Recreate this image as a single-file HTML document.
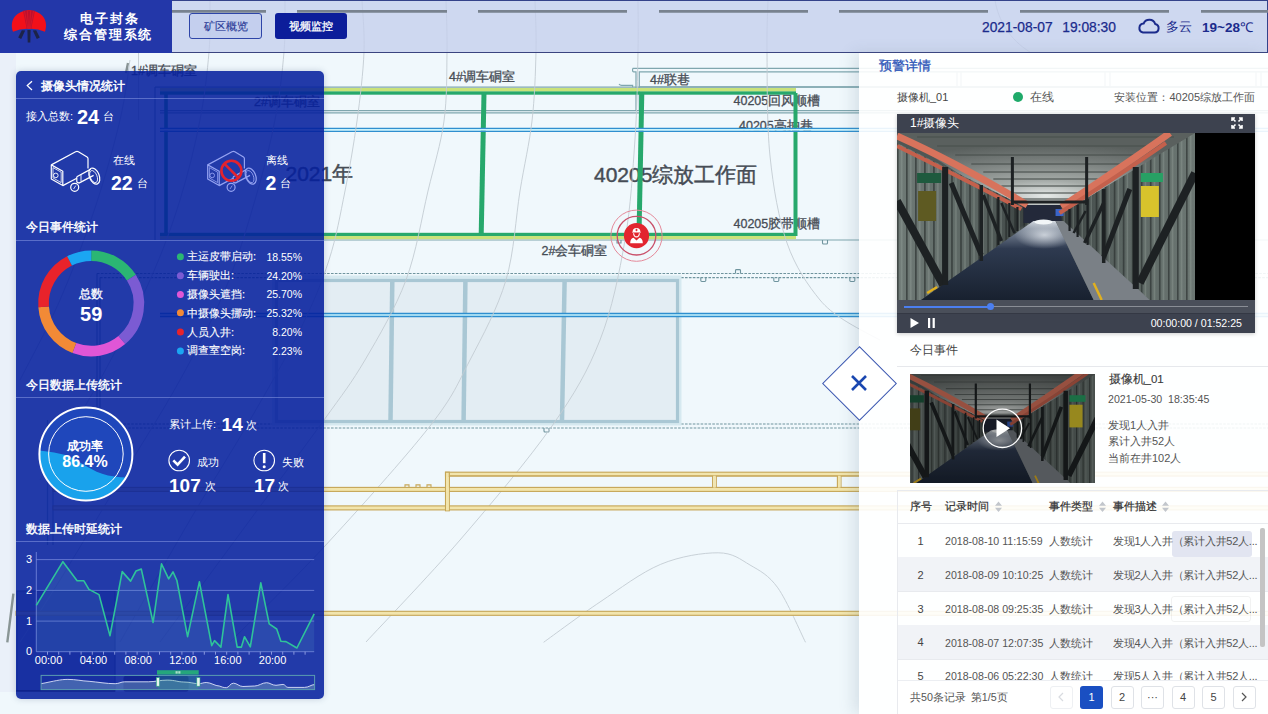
<!DOCTYPE html>
<html><head><meta charset="utf-8">
<style>
*{margin:0;padding:0;box-sizing:border-box}
html,body{width:1268px;height:714px;overflow:hidden;background:#f0f8fc;font-family:"Liberation Sans",sans-serif}
.a{position:absolute}
.t{position:absolute;white-space:nowrap;line-height:1}
svg{position:absolute;left:0;top:0}
</style></head><body>
<!-- MAP -->
<svg width="1268" height="714" viewBox="0 0 1268 714">
<rect width="1268" height="714" fill="#f0f8fc"/>
<rect x="0" y="52" width="16" height="640" fill="#eaf0f9"/>

<!-- top gray dashes -->

<!-- left gray segment -->
<path d="M13.4 593.6 L7.3 642.4 M128 63 L126 73" stroke="#8a9696" stroke-width="2.4"/><path d="M138.5 52 V120" stroke="#c3ccd2" stroke-width="0.9"/>
<!-- map texts -->
<g font-family="Liberation Sans, sans-serif" fill="#464c55" stroke="#464c55" stroke-width="0.3" font-size="12.5">
<text x="131" y="75.4">1#调车硐室</text>
<text x="254" y="106">2#调车硐室</text>
<text x="449" y="81.3">4#调车硐室</text>
<text x="650" y="83.5">4#联巷</text>
<text x="733.5" y="105">40205回风顺槽</text>
<text x="739" y="129.5">40205高抽巷</text>
<text x="733.5" y="227.5">40205胶带顺槽</text>
<text x="541.5" y="254.6">2#会车硐室</text>
<text x="594" y="182" font-size="21" stroke-width="0.45">40205综放工作面</text>
<text x="285.5" y="181" font-size="21" stroke-width="0.45">2021年</text>
</g>
<!-- rooms / lines -->
<g fill="none" stroke="#7fa6ae" stroke-width="1.2">
<path d="M155 87.2H1268"/>
<path d="M160 110.6H1268 M160 112.8H1268"/>
<path d="M160 240H1268"/>
<path d="M632.6 68.4H1268 M632.6 68.4V70.8Q632.6 71.8 633.6 71.8H636V110.6 M639.3 110.6V71.8H1268 M619 84 Q620 85.3 621.5 85.3H632.6V87.2"/>
<path d="M639.3 86.9H1268"/>
<path d="M155 87 V240"/>
</g>

<g fill="none" stroke="#8fb0b8" stroke-width="1.2">
<path d="M957 71.8V87 M961 71.8V87 M1105 71.8V87 M1110 71.8V87 M1256 71.8V87 M1261 71.8V87"/>
</g>
<!-- green workface -->
<rect x="160" y="88" width="636" height="3.6" fill="#c9e27a"/>
<rect x="160" y="91.4" width="636" height="3.3" fill="#27a86c"/>
<rect x="160" y="232.8" width="636" height="3.2" fill="#27a86c"/>
<rect x="160" y="236" width="636" height="3.2" fill="#c9e27a"/>
<g stroke="#27a86c" stroke-width="3.6" fill="none">
<path d="M484 93 L481.2 235" stroke-width="5"/>
<path d="M641.8 93 L639 235" stroke-width="5"/>
<path d="M795.5 93 V236" stroke-width="4"/>
<path d="M166 93 V236" stroke-width="3.6"/>
</g>
<!-- dashed lines -->
<g fill="none" stroke="#6f949e" stroke-width="1.1" stroke-dasharray="2.6 1.3">
<path d="M97 273.5H1268 M100 277.6H1268"/>
<path d="M100 424H1268 M97 428H1268"/>
</g>
<g fill="none" stroke="#6f949e" stroke-width="1.1">
<path d="M735.5 273.5 V270.5 Q735.5 269.6 736.5 269.6 H739.5 Q740.5 269.6 740.5 270.5 V273.5"/>
<path d="M700.8 277.6 V280.6 Q700.8 281.5 701.8 281.5 H704.8 Q705.8 281.5 705.8 280.6 V277.6"/>
<path d="M773.8 277.6 V280.6 Q773.8 281.5 774.8 281.5 H777.8 Q778.8 281.5 778.8 280.6 V277.6"/>
<path d="M849.8 277.6 V280.6 Q849.8 281.5 850.8 281.5 H853.8 Q854.8 281.5 854.8 280.6 V277.6"/>
<path d="M544 428 V431 Q544 432 545 432 H548 Q549 432 549 431 V428"/>
<path d="M1068 428 V431 Q1068 432 1069 432 H1072 Q1073 432 1073 431 V428"/>
<path d="M822.5 240 V243 Q822.5 244 823.5 244 H826.5 Q827.5 244 827.5 243 V240"/>
<path d="M617 240 V243 H621 V240"/>
</g>
<path d="M97 273.5V428 M100 277.6V424" stroke="#6f949e" stroke-width="1.1" fill="none"/>
<path d="M53 420V545 M47.5 420V545" stroke="#8fb0b8" stroke-width="1.2" fill="none"/>
<rect x="17" y="591" width="98" height="100" fill="#a4afc2" stroke="#6a7890" stroke-width="1.2"/>
<!-- big room -->
<rect x="272" y="275.5" width="409.5" height="150" fill="#d6e9f0"/>
<rect x="276.5" y="280.5" width="401" height="141" fill="#e3edf3" stroke="#a9c7d4" stroke-width="3.2"/>
<g stroke="#a9c7d4" stroke-width="4.5">
<path d="M392.3 281 L390.5 421"/>
<path d="M465.4 281 L463.6 421"/>
<path d="M564.6 281 L562 421"/>
</g>
<g fill="none" stroke="#2f8fcf" stroke-width="1.3">
<path d="M160 129.8H1268" stroke="#c8f3fc" stroke-width="2"/><path d="M160 128.3H1268 M160 131.3H1268"/>
<path d="M160 315H1268" stroke="#c8f3fc" stroke-width="2"/><path d="M160 313.5H1268 M160 316.5H1268"/>
</g>
<g fill="none" stroke="#c3ccd2" stroke-width="0.9">
<path d="M362.0 0.0 C362.3 8.7 364.8 31.8 364.0 52.0 C363.2 72.2 360.2 97.8 357.0 121.0 C353.8 144.2 349.7 167.8 345.0 191.0 C340.3 214.2 336.5 236.8 329.0 260.0 C321.5 283.2 313.2 303.3 300.0 330.0 C286.8 356.7 268.3 388.3 250.0 420.0 C231.7 451.7 211.7 483.0 190.0 520.0 C168.3 557.0 131.7 621.7 120.0 642.0"/>
<path d="M446.0 0.0 C446.2 8.7 447.3 31.8 447.0 52.0 C446.7 72.2 447.2 97.8 444.0 121.0 C440.8 144.2 434.3 164.5 428.0 191.0 C421.7 217.5 416.5 251.8 406.0 280.0 C395.5 308.2 378.7 336.7 365.0 360.0 C351.3 383.3 343.2 393.3 324.0 420.0 C304.8 446.7 277.3 483.0 250.0 520.0 C222.7 557.0 175.0 621.7 160.0 642.0"/>
<path d="M535.0 0.0 C535.2 8.7 536.5 31.8 536.0 52.0 C535.5 72.2 534.7 97.8 532.0 121.0 C529.3 144.2 524.3 164.5 520.0 191.0 C515.7 217.5 514.3 251.8 506.0 280.0 C497.7 308.2 482.7 335.7 470.0 360.0 C457.3 384.3 454.3 394.8 430.0 426.0 C405.7 457.2 357.3 511.0 324.0 547.0 C290.7 583.0 245.7 626.2 230.0 642.0"/>
<path d="M638.0 0.0 C638.0 8.7 638.5 28.8 638.0 52.0 C637.5 75.2 637.2 107.7 635.0 139.0 C632.8 170.3 630.8 206.5 625.0 240.0 C619.2 273.5 612.2 309.0 600.0 340.0 C587.8 371.0 575.3 392.7 552.0 426.0 C528.7 459.3 491.0 504.0 460.0 540.0 C429.0 576.0 381.7 625.0 366.0 642.0"/>
<path d="M768.0 0.0 C767.8 8.7 766.7 26.0 767.0 52.0 C767.3 78.0 766.7 124.2 770.0 156.0 C773.3 187.8 778.7 219.0 787.0 243.0 C795.3 267.0 808.0 285.3 820.0 300.0 C832.0 314.7 852.5 325.8 880.0 340.0"/>
<path d="M285.0 0.0 C284.8 8.7 285.7 32.0 284.0 52.0 C282.3 72.0 279.8 95.3 275.0 120.0 C270.2 144.7 263.3 171.7 255.0 200.0 C246.7 228.3 237.5 260.0 225.0 290.0 C212.5 320.0 197.5 348.3 180.0 380.0 C162.5 411.7 140.0 446.7 120.0 480.0 C100.0 513.3 76.7 553.0 60.0 580.0 C43.3 607.0 26.7 631.7 20.0 642.0"/>
<path d="M210.0 0.0 C209.8 8.7 210.7 32.0 209.0 52.0 C207.3 72.0 204.8 95.3 200.0 120.0 C195.2 144.7 188.3 173.3 180.0 200.0 C171.7 226.7 163.3 250.0 150.0 280.0 C136.7 310.0 118.3 346.7 100.0 380.0 C81.7 413.3 50.0 463.3 40.0 480.0"/>
<path d="M130.0 60.0 C128.3 70.0 125.8 95.3 120.0 120.0 C114.2 144.7 105.0 178.0 95.0 208.0 C85.0 238.0 72.5 271.3 60.0 300.0 C47.5 328.7 26.7 366.7 20.0 380.0"/>
<path d="M543.6 642.3 C553.0 635.6 580.5 615.0 600.0 602.0 C619.5 589.0 641.0 572.5 660.7 564.3 C680.4 556.1 703.3 552.7 718.2 552.8 C733.1 552.9 740.1 559.2 750.0 565.0 C759.9 570.8 768.5 574.9 777.8 587.8 C787.0 600.7 800.9 633.2 805.5 642.3"/>
<path d="M995 0 C998 20 1010 40 1030 52"/>
</g>
<!-- gold -->
<g fill="#f2e5ad" stroke="#c5a555" stroke-width="1.1">
<rect x="445.5" y="472.2" width="830" height="3.8"/>
<rect x="53" y="487.4" width="1223" height="4"/>
<rect x="53" y="505.9" width="1223" height="4"/>
<rect x="16" y="611.3" width="1260" height="4"/>
<rect x="445.5" y="472.2" width="3.8" height="38.6"/>
</g>
<g fill="none" stroke="#c6a657" stroke-width="1.1">
<path d="M449.3 476 V487.4 M449.3 476H712.6V487.4 M716.3 487.4V476H837.4V487.4 M841 487.4V476H1268"/>
<path d="M405 487.4 v-2.5 h4 v2.5 M416 487.4 v-2.5 h4 v2.5 M427 487.4 v-2.5 h4 v2.5"/>
</g>
<g fill="#f2e5ad"><rect x="446" y="476.6" width="2.8" height="33.8"/><rect x="446" y="488" width="2.8" height="3"/><rect x="713.2" y="476" width="2.5" height="11.6"/><rect x="838" y="476" width="2.5" height="11.6"/></g>
<!-- alarm marker -->
<g>
<circle cx="636.5" cy="235.7" r="25.6" fill="none" stroke="#e58a9a" stroke-width="1"/>
<circle cx="636.5" cy="235.7" r="19.3" fill="none" stroke="#c9506a" stroke-width="1.3"/>
<circle cx="636.5" cy="235.7" r="12.6" fill="#e2252f"/>
<path d="M632.6 231.8 A3.9 3.9 0 0 1 640.4 231.8 L641.2 232.6 H631.8Z" fill="#fff"/>
<path d="M636.5 228.8V231.2 M635.3 230H637.7" stroke="#e2252f" stroke-width="0.9"/>
<path d="M633.6 233.2 Q633.8 236.8 636.5 236.9 Q639.2 236.8 639.4 233.2" fill="none" stroke="#fff" stroke-width="1.1"/>
<path d="M630.2 243.3 Q630.2 238.3 633.6 237.8 L636.5 240.6 L639.4 237.8 Q642.8 238.3 642.8 243.3Z" fill="#fff"/>
</g>
</svg>
<!-- HEADER -->
<div class="a" style="left:0;top:0;width:1268px;height:53px;background:rgba(196,206,236,0.78);border:1px solid #34428a;border-bottom:1.5px solid #3a4480"></div>
<svg width="1268" height="53" style="left:0;top:0"><path d="M116 11.4H266 M297 11.4H447 M478 11.4H627 M659 11.4H808 M839 11.4H988 M1020 11.4H1169 M1201 11.4H1268" stroke="#78828f" stroke-width="2.8" fill="none"/></svg>
<div class="a" style="left:0;top:0;width:172px;height:53px;background:#2337a9"></div>
<svg width="60" height="50" style="left:0;top:0">
<path d="M13 31.8 C9.5 22 14 11.5 29 10 C44 11.5 48.5 22 45 31.8 Q37 28.2 29 28.8 Q21 28.2 13 31.8Z" fill="#f2101a"/>
<polygon points="23,10.6 35,10.6 31.2,29 26.8,29" fill="#b50f30" opacity="0.85"/>
<path d="M24.5 11 L27.8 29 M27.3 10.5 L28.6 29 M30.7 10.5 L29.4 29 M33.5 11 L30.2 29" stroke="#e0182a" stroke-width="0.7" fill="none"/>
<g fill="#1c2348">
<polygon points="21.8,30.2 25.2,30.6 21.2,39 18.2,37.6"/>
<polygon points="27.4,30 30.6,30 30.3,42.6 27.7,42.6"/>
<polygon points="32.8,30.6 36.2,30.2 39.8,37.6 36.8,39"/>
</g>
</svg>
<div class="t" style="left:80px;top:12px;font-size:13px;font-weight:bold;color:#fff;letter-spacing:1.9px">电子封条</div>
<div class="t" style="left:64px;top:27.5px;font-size:13px;font-weight:bold;color:#fff;letter-spacing:1.9px">综合管理系统</div>
<div class="a" style="left:189px;top:13px;width:73px;height:26px;border:1px solid #2e45a8;border-radius:3px;background:rgba(190,202,236,0.6)"></div>
<div class="t" style="left:189px;top:20.5px;width:73px;text-align:center;font-size:11px;color:#2c3c98;-webkit-text-stroke:0.15px">矿区概览</div>
<div class="a" style="left:275px;top:13px;width:72px;height:26px;border-radius:3px;background:#0c1d9a"></div>
<div class="t" style="left:275px;top:20.5px;width:72px;text-align:center;font-size:11px;color:#fff;-webkit-text-stroke:0.3px">视频监控</div>
<div class="t" style="left:982px;top:20.5px;font-size:13.8px;color:#1b2b8c;word-spacing:1px;-webkit-text-stroke:0.25px">2021-08-07 &nbsp;19:08:30</div>
<svg width="24" height="20" style="left:1137px;top:16px">
<path d="M6 16.5 H17.5 A4.3 4.3 0 0 0 18.2 8 A6.2 6.2 0 0 0 6.6 7.6 A4.5 4.5 0 0 0 6 16.5Z" fill="none" stroke="#1b2b8c" stroke-width="2"/>
</svg>
<div class="t" style="left:1166px;top:20.5px;font-size:12.5px;color:#1b2b8c">多云</div>
<div class="t" style="left:1202px;top:20.5px;font-size:13.5px;color:#1b2b8c;font-weight:bold">19~28<span style="font-weight:normal">℃</span></div>
<!-- LEFT -->
<div class="a" style="left:16px;top:71px;width:308px;height:628px;border-radius:5px;background:rgba(5,31,157,0.88);box-shadow:0 0 6px rgba(60,80,120,0.25)"></div>
<div class="a" style="left:16px;top:98px;width:308px;height:1px;background:rgba(160,175,240,0.45)"></div>
<div class="a" style="left:16px;top:240px;width:308px;height:1px;background:rgba(160,175,240,0.45)"></div>
<div class="a" style="left:16px;top:397px;width:308px;height:1px;background:rgba(160,175,240,0.45)"></div>
<div class="a" style="left:16px;top:541px;width:308px;height:1px;background:rgba(160,175,240,0.45)"></div>
<svg width="1268" height="714" style="left:0;top:0">
<path d="M32 81.2 L27.3 85.6 L32 90" fill="none" stroke="#fff" stroke-width="1.3"/>
<!-- camera online -->
<g fill="none" stroke="#fff" stroke-width="1.2" stroke-linejoin="round">
<path d="M51.3 164.9 L75.6 151.7 Q77 151 78.4 151.7 L87.1 157 Q88 157.6 88 158.6 V168.4"/>
<path d="M51.3 164.9 L62.8 171.2 V185.6 L51.3 178.9 Z"/>
<path d="M53 167.6 L61.2 172.2 V182.6 L53 177.9 Z" stroke-width="0.8"/>
<circle cx="55.8" cy="175.4" r="2.3" stroke-width="0.9"/>
<path d="M62.8 185.6 L76.8 178.2"/>
<path d="M76.8 176.8 L90.8 169.1 M78.9 183.1 L93.6 175.4 M76.8 176.8 V182 L78.9 183.1"/>
<path d="M81 174.6 V181.2" stroke-width="0.9"/>
<ellipse cx="94.3" cy="176.1" rx="4.9" ry="8.4" transform="rotate(-22 94.3 176.1)"/>
<ellipse cx="93.6" cy="176.6" rx="3.4" ry="6.4" transform="rotate(-22 93.6 176.6)" stroke-width="0.8"/>
<circle cx="74.7" cy="187.3" r="4"/>
<path d="M73.6 189 L75.8 185.6" stroke-width="0.8"/>
</g>
<g transform="translate(156.4 0)" fill="none" stroke="#95a3f2" stroke-width="1.2" stroke-linejoin="round">
<path d="M51.3 164.9 L75.6 151.7 Q77 151 78.4 151.7 L87.1 157 Q88 157.6 88 158.6 V168.4"/>
<path d="M51.3 164.9 L62.8 171.2 V185.6 L51.3 178.9 Z"/>
<path d="M53 167.6 L61.2 172.2 V182.6 L53 177.9 Z" stroke-width="0.8"/>
<circle cx="55.8" cy="175.4" r="2.3" stroke-width="0.9"/>
<path d="M62.8 185.6 L76.8 178.2"/>
<path d="M76.8 176.8 L90.8 169.1 M78.9 183.1 L93.6 175.4 M76.8 176.8 V182 L78.9 183.1"/>
<path d="M81 174.6 V181.2" stroke-width="0.9"/>
<ellipse cx="94.3" cy="176.1" rx="4.9" ry="8.4" transform="rotate(-22 94.3 176.1)"/>
<ellipse cx="93.6" cy="176.6" rx="3.4" ry="6.4" transform="rotate(-22 93.6 176.6)" stroke-width="0.8"/>
<circle cx="74.7" cy="187.3" r="4"/>
<path d="M73.6 189 L75.8 185.6" stroke-width="0.8"/>
</g>
<circle cx="231.4" cy="170.8" r="10" fill="none" stroke="#e3232e" stroke-width="2.6"/>
<path d="M224.3 163.7 L238.5 177.9" stroke="#e3232e" stroke-width="2.6"/>
<!-- donut -->
<g fill="none" stroke-width="10.6">
<path d="M91.20 255.70 A47.7 47.7 0 0 1 131.38 277.70" stroke="#2bb673"/>
<path d="M131.38 277.70 A47.7 47.7 0 0 1 121.80 339.99" stroke="#7b5bd3"/>
<path d="M121.80 339.99 A47.7 47.7 0 0 1 74.34 348.02" stroke="#e056d6"/>
<path d="M74.34 348.02 A47.7 47.7 0 0 1 43.62 306.81" stroke="#f28a36"/>
<path d="M43.62 306.81 A47.7 47.7 0 0 1 69.54 260.90" stroke="#e8232b"/>
<path d="M69.54 260.90 A47.7 47.7 0 0 1 91.20 255.70" stroke="#1ba6f2"/>
</g>
<g>
<circle cx="180.4" cy="256.8" r="3.5" fill="#2bb673"/>
<circle cx="180.4" cy="275.8" r="3.5" fill="#7b5bd3"/>
<circle cx="180.4" cy="294.6" r="3.5" fill="#e056d6"/>
<circle cx="180.4" cy="312.8" r="3.5" fill="#f28a36"/>
<circle cx="180.4" cy="332.1" r="3.5" fill="#e8232b"/>
<circle cx="180.4" cy="351" r="3.5" fill="#1ba6f2"/>
</g>
<!-- gauge -->
<defs><clipPath id="gc"><circle cx="85.9" cy="454" r="46"/></clipPath></defs>
<circle cx="85.9" cy="454" r="46" fill="#1f47bb"/>
<path clip-path="url(#gc)" d="M38 450.4 C50 452 58 452.5 68 456 C80 461 92 472 108 475.5 C118 477.5 126 477.5 134 477.8 V510 H38Z" fill="#19a2ec"/>
<circle cx="85.9" cy="454" r="46.5" fill="none" stroke="#fff" stroke-width="2"/>
<circle cx="85.9" cy="454" r="37.3" fill="none" stroke="#fff" stroke-width="1"/>
<!-- upload icons -->
<circle cx="179.2" cy="460.5" r="10.3" fill="none" stroke="#fff" stroke-width="1.1"/>
<path d="M173.3 460.3 L177.6 464.6 L185 456.6" fill="none" stroke="#fff" stroke-width="2.6"/>
<circle cx="264.2" cy="460.5" r="10.3" fill="none" stroke="#fff" stroke-width="1.1"/>
<path d="M264.2 453 V463.2" stroke="#fff" stroke-width="2.6"/>
<circle cx="264.2" cy="466.8" r="1.5" fill="#fff"/>
<!-- chart -->
<g stroke="rgba(150,165,240,0.55)" stroke-width="1">
<path d="M36.3 559.6H314.2 M36.3 590.4H314.2 M36.3 621.1H314.2"/>
</g>
<path d="M36.3 651.7H314.2 M36.3 552V651.7" stroke="rgba(150,165,240,0.6)" stroke-width="1"/>
<path d="M47.5 651.7v3 M58.7 651.7v3 M69.9 651.7v3 M81.1 651.7v3 M92.3 651.7v3 M103.5 651.7v3 M114.7 651.7v3 M125.9 651.7v3 M137.1 651.7v3 M148.3 651.7v3 M159.5 651.7v3 M170.7 651.7v3 M181.9 651.7v3 M193.1 651.7v3 M204.3 651.7v3 M215.5 651.7v3 M226.7 651.7v3 M237.9 651.7v3 M249.1 651.7v3 M260.3 651.7v3 M271.5 651.7v3 M282.7 651.7v3 M293.9 651.7v3 M305.1 651.7v3" stroke="rgba(180,190,245,0.7)" stroke-width="1"/>
<path d="M36.3 605.3 L62.9 561.7 L77.1 580.8 L83.9 580.8 L88.9 589.4 L99.0 594.6 L110.0 635.7 L122.2 571.6 L130.6 581.1 L136.0 571.0 L141.3 569.1 L153.1 622.5 L161.5 563.9 L168.7 578.9 L173.0 571.9 L176.9 580.5 L187.6 636.7 L199.4 581.7 L211.7 645.6 L214.5 640.6 L220.9 647.1 L228.0 594.6 L237.2 647.1 L241.4 647.1 L244.5 636.7 L250.3 646.8 L260.8 582.9 L269.2 623.8 L276.7 629.0 L280.9 641.3 L286.0 641.6 L296.9 648.0 L314.2 613.9 L314.2 651.7 L36.3 651.7 Z" fill="rgba(90,150,200,0.18)"/>
<path d="M36.3 605.3 L62.9 561.7 L77.1 580.8 L83.9 580.8 L88.9 589.4 L99.0 594.6 L110.0 635.7 L122.2 571.6 L130.6 581.1 L136.0 571.0 L141.3 569.1 L153.1 622.5 L161.5 563.9 L168.7 578.9 L173.0 571.9 L176.9 580.5 L187.6 636.7 L199.4 581.7 L211.7 645.6 L214.5 640.6 L220.9 647.1 L228.0 594.6 L237.2 647.1 L241.4 647.1 L244.5 636.7 L250.3 646.8 L260.8 582.9 L269.2 623.8 L276.7 629.0 L280.9 641.3 L286.0 641.6 L296.9 648.0 L314.2 613.9" fill="none" stroke="#2fc39a" stroke-width="1.6" stroke-linejoin="round"/>
<rect x="123.5" y="676" width="65" height="15.5" rx="2" fill="rgba(5,20,130,0.55)"/><path d="M16 690.8H115" stroke="rgba(10,25,120,0.6)" stroke-width="1.2"/>
<!-- slider -->
<path d="M41.1 683.7 C55 681 60 679.4 67.9 679.4 C76 679.4 82 681 89.1 681.3 C98 682 106 683.7 115.2 683.7 C119 683.7 121 681.8 124.6 681.8 L148.3 681.8 C155 681.8 160 680.1 167.2 680.1 C175 680.1 178 682 183.8 682 C190 682 194 683.7 198.4 683.7 C202 683.7 203 682.5 206.2 682.5 C211 682.5 215 686 219.3 686 C222 686.8 223 687.7 226.4 687.7 C229 687.7 230 683.2 233.5 683.2 C237 683.2 239 686.5 242.9 686.5 L254.7 686 C259 686 262 682.7 266.6 682.7 C270 682.7 272 685.3 276 685.3 L283.1 684.4 C285 684.4 286 687.4 287.9 687.4 L304.4 687.4 C309 687.4 311 684.6 314.6 684.6 V689.6 H41.1Z" fill="rgba(110,150,190,0.5)" stroke="none"/>
<path d="M41.1 683.7 C55 681 60 679.4 67.9 679.4 C76 679.4 82 681 89.1 681.3 C98 682 106 683.7 115.2 683.7 C119 683.7 121 681.8 124.6 681.8 L148.3 681.8 C155 681.8 160 680.1 167.2 680.1 C175 680.1 178 682 183.8 682 C190 682 194 683.7 198.4 683.7 C202 683.7 203 682.5 206.2 682.5 C211 682.5 215 686 219.3 686 C222 686.8 223 687.7 226.4 687.7 C229 687.7 230 683.2 233.5 683.2 C237 683.2 239 686.5 242.9 686.5 L254.7 686 C259 686 262 682.7 266.6 682.7 C270 682.7 272 685.3 276 685.3 L283.1 684.4 C285 684.4 286 687.4 287.9 687.4 L304.4 687.4 C309 687.4 311 684.6 314.6 684.6" fill="none" stroke="rgba(230,235,255,0.85)" stroke-width="1"/>
<rect x="157.8" y="675.4" width="40.6" height="14.2" fill="rgba(50,170,140,0.3)"/>
<rect x="41.1" y="675.4" width="273.5" height="14.2" fill="none" stroke="#5a9cb0" stroke-width="1"/>
<rect x="157" y="670.2" width="41.7" height="4.4" fill="#25a67c"/>
<path d="M176.2 671.2V673.6 M178 671.2V673.6 M179.8 671.2V673.6" stroke="#fff" stroke-width="0.9"/>
<rect x="156.3" y="677.6" width="3.2" height="8.6" fill="#e8f5ef" stroke="#25a67c" stroke-width="0.6"/>
<rect x="196.8" y="677.6" width="3.2" height="8.6" fill="#e8f5ef" stroke="#25a67c" stroke-width="0.6"/>
</svg>
<div class="t" style="left:41px;top:79.5px;font-size:12.3px;color:#fff;-webkit-text-stroke:0.45px">摄像头情况统计</div>
<div class="t" style="left:26px;top:110.8px;font-size:11px;color:#fff">接入总数:</div>
<div class="t" style="left:77px;top:106.7px;font-size:20px;font-weight:bold;color:#fff">24</div>
<div class="t" style="left:103px;top:110.8px;font-size:11px;color:#fff">台</div>
<div class="t" style="left:113px;top:154.8px;font-size:11px;color:#fff">在线</div>
<div class="t" style="left:111px;top:174px;font-size:19.5px;font-weight:bold;color:#fff">22</div>
<div class="t" style="left:137px;top:177.8px;font-size:11px;color:#fff">台</div>
<div class="t" style="left:266px;top:154.8px;font-size:11px;color:#fff">离线</div>
<div class="t" style="left:265.5px;top:174px;font-size:19.5px;font-weight:bold;color:#fff">2</div>
<div class="t" style="left:280px;top:177.8px;font-size:11px;color:#fff">台</div>
<div class="t" style="left:26px;top:221.4px;font-size:12px;color:#fff;-webkit-text-stroke:0.4px">今日事件统计</div>
<div class="t" style="left:61.2px;top:288px;width:60px;text-align:center;font-size:12px;color:#fff;-webkit-text-stroke:0.3px">总数</div>
<div class="t" style="left:61.2px;top:304px;width:60px;text-align:center;font-size:20px;font-weight:bold;color:#fff">59</div>
<div class="t" style="left:187px;top:251.5px;font-size:11px;color:#fff;-webkit-text-stroke:0.12px;line-height:18.8px;top:247.4px">主运皮带启动:<br>车辆驶出:<br>摄像头遮挡:<br>中摄像头挪动:<br>人员入井:<br>调查室空岗:</div>
<div class="t" style="left:242px;width:60px;text-align:right;font-size:10.5px;color:#fff;line-height:18.8px;top:247.8px">18.55%<br>24.20%<br>25.70%<br>25.32%<br>8.20%<br>2.23%</div>
<div class="t" style="left:26px;top:379px;font-size:12px;color:#fff;-webkit-text-stroke:0.4px">今日数据上传统计</div>
<div class="t" style="left:54.6px;top:440px;width:60px;text-align:center;font-size:12px;font-weight:bold;color:#fff">成功率</div>
<div class="t" style="left:45px;top:454px;width:80px;text-align:center;font-size:16px;font-weight:bold;color:#fff">86.4%</div>
<div class="t" style="left:169px;top:419px;font-size:11px;color:#fff">累计上传:</div>
<div class="t" style="left:221.6px;top:414.8px;font-size:19px;font-weight:bold;color:#fff">14</div>
<div class="t" style="left:245.5px;top:419.5px;font-size:11px;color:#fff">次</div>
<div class="t" style="left:196.6px;top:456.5px;font-size:11px;color:#fff">成功</div>
<div class="t" style="left:281.6px;top:456.5px;font-size:11px;color:#fff">失败</div>
<div class="t" style="left:169px;top:476.2px;font-size:19px;font-weight:bold;color:#fff">107</div>
<div class="t" style="left:204.7px;top:481px;font-size:11px;color:#fff">次</div>
<div class="t" style="left:254px;top:476.2px;font-size:19px;font-weight:bold;color:#fff">17</div>
<div class="t" style="left:277.8px;top:481px;font-size:11px;color:#fff">次</div>
<div class="t" style="left:26px;top:522.8px;font-size:12px;color:#fff;-webkit-text-stroke:0.4px">数据上传时延统计</div>
<div class="t" style="left:19px;top:553.8px;width:20px;text-align:center;font-size:11px;color:#fff;line-height:30.7px;top:544.3px">3<br>2<br>1<br>0</div>
<div class="t" style="left:28.6px;top:655px;width:40px;text-align:center;font-size:11px;color:#fff">00:00</div>
<div class="t" style="left:73.4px;top:655px;width:40px;text-align:center;font-size:11px;color:#fff">04:00</div>
<div class="t" style="left:118.2px;top:655px;width:40px;text-align:center;font-size:11px;color:#fff">08:00</div>
<div class="t" style="left:163px;top:655px;width:40px;text-align:center;font-size:11px;color:#fff">12:00</div>
<div class="t" style="left:207.8px;top:655px;width:40px;text-align:center;font-size:11px;color:#fff">16:00</div>
<div class="t" style="left:252.6px;top:655px;width:40px;text-align:center;font-size:11px;color:#fff">20:00</div>
<!-- RIGHT -->
<div class="a" style="left:859px;top:53px;width:409px;height:661px;background:rgba(255,255,255,0.9);box-shadow:-6px 0 14px rgba(90,110,130,0.16)"></div>
<svg width="1268" height="714" style="left:0;top:0">
<defs>
<radialGradient id="ceil" cx="0.5" cy="0.85" r="0.7">
<stop offset="0" stop-color="#e6eae8"/><stop offset="0.3" stop-color="#a4aaa7"/><stop offset="0.7" stop-color="#767c7a"/><stop offset="1" stop-color="#5a605e"/>
</radialGradient>
<linearGradient id="conv" x1="0" y1="0" x2="0" y2="1">
<stop offset="0" stop-color="#d8dee4"/><stop offset="0.1" stop-color="#7f8a9a"/><stop offset="0.35" stop-color="#2e3a50"/><stop offset="1" stop-color="#18212f"/>
</linearGradient>
<linearGradient id="lw" x1="0" y1="0" x2="1" y2="0">
<stop offset="0" stop-color="#6f7a76"/><stop offset="0.6" stop-color="#5a6461"/><stop offset="1" stop-color="#353c3b"/>
</linearGradient>
<linearGradient id="rw" x1="1" y1="0" x2="0" y2="0">
<stop offset="0" stop-color="#6c7773"/><stop offset="0.6" stop-color="#58625f"/><stop offset="1" stop-color="#343b3a"/>
</linearGradient>
<pattern id="stripes" width="9" height="10" patternUnits="userSpaceOnUse"><rect x="0" width="1.6" height="10" fill="rgba(20,24,24,0.5)"/><rect x="4" width="1.4" height="10" fill="rgba(200,212,206,0.22)"/></pattern>
<symbol id="scene" viewBox="0 0 297 167" preserveAspectRatio="none">
<rect width="297" height="167" fill="#4e5755"/>
<polygon points="0,0 297,0 190,74 112,74" fill="url(#ceil)"/>
<g stroke="#4a504e" stroke-width="1.4" opacity="0.75">
<path d="M20 4H276 M40 13H256 M58 22H238 M74 31H222 M86 39H210 M96 46H200 M104 53H193 M110 60H188 M115 66H183"/>
</g>
<polygon points="0,10 128,74 136,90 24,167 0,167" fill="url(#lw)"/>
<polygon points="0,10 128,74 136,90 24,167 0,167" fill="url(#stripes)"/>
<polygon points="297,0 168,78 160,90 252,167 297,167" fill="url(#rw)"/>
<polygon points="297,0 168,78 160,90 252,167 297,167" fill="url(#stripes)"/>
<rect x="126" y="72" width="38" height="18" fill="#23293a"/>
<rect x="158" y="76" width="8" height="7" fill="#3a64c8"/>
<polygon points="24,167 196,167 158,88 136,88" fill="url(#conv)"/>
<radialGradient id="glow" cx="0.5" cy="0.5" r="0.5"><stop offset="0" stop-color="rgba(235,240,245,0.75)"/><stop offset="1" stop-color="rgba(235,240,245,0)"/></radialGradient><ellipse cx="147" cy="102" rx="30" ry="14" fill="url(#glow)"/><ellipse cx="146" cy="89" rx="9" ry="2.5" fill="#f2f6f8"/>
<polygon points="196,167 252,167 166,88 158,88" fill="#7a8086"/>
<g fill="none" stroke-linecap="butt">
<path d="M0 3 Q60 30 130 72" stroke="#d8735c" stroke-width="7"/>
<path d="M0 13 Q55 40 124 76" stroke="#c4604c" stroke-width="4"/>
<path d="M272 0 Q230 30 164 74" stroke="#d8735c" stroke-width="7"/>
<path d="M268 10 Q225 40 162 80" stroke="#c4604c" stroke-width="4"/>
</g>
<g stroke="#1d2123" fill="none">
<path d="M0 68 L46 152" stroke-width="8"/>
<path d="M54 50 L84 122" stroke-width="5"/>
<path d="M86 62 L104 108" stroke-width="3.5"/>
<path d="M104 70 L117 100" stroke-width="2.5"/>
<path d="M297 40 L242 150" stroke-width="8"/>
<path d="M232 56 L206 124" stroke-width="5"/>
<path d="M206 70 L187 110" stroke-width="3.5"/>
<path d="M188 78 L176 100" stroke-width="2.5"/>
<path d="M48 34 V152 M238 34 V156" stroke-width="6"/>
<path d="M84 52 V128 M206 56 V130" stroke-width="3.5"/>
<path d="M101 64 V112 M190 66 V112 M112 70 V104 M180 72 V104 M120 74 V98 M172 76 V98" stroke-width="2.2"/>
<path d="M115 24 V72 M189 24 V72 M115 69 H189" stroke-width="3"/>
</g>
<rect x="20" y="40" width="24" height="10" fill="#1e5a3e"/>
<rect x="21" y="58" width="18" height="30" fill="#5e5a22"/>
<rect x="243" y="40" width="22" height="9" fill="#27a064"/>
<rect x="243" y="53" width="18" height="31" fill="#d8c32c"/>
<path d="M30 160 L40 154 M196 150 L204 167" stroke="#e0b020" stroke-width="2.5"/>
</symbol>
</defs>
</svg>
<div class="t" style="left:879px;top:60px;font-size:12.6px;color:#2d55b8;-webkit-text-stroke:0.3px">预警详情</div>
<div class="t" style="left:897px;top:92px;font-size:11px;color:#454545">摄像机_01</div>
<div class="a" style="left:1013px;top:92.3px;width:10px;height:10px;border-radius:50%;background:#1faa6a"></div>
<div class="t" style="left:1030px;top:92px;font-size:11.5px;color:#555">在线</div>
<div class="t" style="left:1055px;width:200px;text-align:right;top:92px;font-size:11px;color:#555">安装位置：40205综放工作面</div>
<div class="a" style="left:897px;top:113.7px;width:357.5px;height:219px;background:#3d424f;box-shadow:0 1px 4px rgba(0,0,0,0.2)"></div>
<div class="t" style="left:910px;top:117.4px;font-size:12px;color:#fff">1#摄像头</div>
<svg width="12" height="12" style="left:1230.5px;top:117px" fill="none" stroke="#fff" stroke-width="1.6">
<path d="M1 4V1H4 M8 1H11V4 M11 8V11H8 M4 11H1V8 M1 1L4.5 4.5 M11 1L7.5 4.5 M11 11L7.5 7.5 M1 11L4.5 7.5"/>
</svg>
<svg width="298" height="167" style="left:897px;top:133px"><use href="#scene" width="298" height="167"/></svg>
<div class="a" style="left:1194.6px;top:133px;width:60px;height:167px;background:#000"></div>
<div class="a" style="left:897px;top:300px;width:357.5px;height:13px;background:#4a4f5a"></div>
<div class="a" style="left:897px;top:313px;width:357.5px;height:1px;background:#343844"></div>
<div class="a" style="left:904px;top:306px;width:87px;height:1.6px;background:#4b7ff0"></div>
<div class="a" style="left:991px;top:306px;width:257px;height:1.4px;background:#8a8e96"></div>
<div class="a" style="left:987px;top:303px;width:7.4px;height:7.4px;border-radius:50%;background:#4b7ff0"></div>
<svg width="40" height="16" style="left:905px;top:315px">
<path d="M5.5 3 L14 8 L5.5 13Z" fill="#fff"/>
<rect x="23" y="3" width="2.2" height="10" fill="#fff"/><rect x="27.6" y="3" width="2.2" height="10" fill="#fff"/>
</svg>
<div class="t" style="left:1100px;width:142px;text-align:right;top:318px;font-size:10.6px;color:#fff">00:00:00 / 01:52:25</div>
<div class="t" style="left:910px;top:344.6px;font-size:11.5px;color:#444">今日事件</div>
<div class="a" style="left:897px;top:366px;width:371px;height:1px;background:#e6e8ec"></div>
<svg width="185" height="109" style="left:910.3px;top:373.7px"><svg width="185" height="109" viewBox="25 11 253 149" preserveAspectRatio="none"><use href="#scene" width="297" height="167"/></svg><rect width="185" height="109" fill="rgba(0,0,0,0.3)"/>
<circle cx="92.4" cy="54.3" r="19.2" fill="rgba(0,0,0,0.05)" stroke="#fff" stroke-width="1.3"/>
<path d="M86.5 45.5 L100 54.3 L86.5 63.1Z" fill="#fff"/>
</svg>
<div class="t" style="left:1108.5px;top:373.8px;font-size:11.5px;color:#3a3a3a;-webkit-text-stroke:0.12px">摄像机_01</div>
<div class="t" style="left:1108px;top:393.8px;font-size:10.6px;color:#555;word-spacing:0px">2021-05-30 &nbsp;18:35:45</div>
<div class="t" style="left:1108px;top:419.3px;font-size:11px;color:#555;line-height:16.6px;top:416.8px">发现1人入井<br>累计入井52人<br>当前在井102人</div>
<!-- table -->
<div class="a" style="left:897px;top:490px;width:371px;height:224px;border-left:1px solid #e8eaee;border-top:1px solid #e8eaee"></div>
<div class="a" style="left:898px;top:523px;width:370px;height:1px;background:#e8eaee"></div>
<div class="a" style="left:898px;top:557px;width:370px;height:34px;background:#f1f3f7"></div>
<div class="a" style="left:898px;top:625px;width:370px;height:34px;background:#f1f3f7"></div>
<div class="a" style="left:898px;top:591px;width:370px;height:1px;background:#e8eaee"></div>
<div class="a" style="left:898px;top:659px;width:370px;height:1px;background:#e8eaee"></div>
<div class="a" style="left:1172px;top:531.4px;width:79.5px;height:26px;border-radius:3px;background:#e2e5f1"></div>
<div class="a" style="left:1171px;top:596px;width:80px;height:26px;border-radius:3px;border:1px solid rgba(0,0,0,0.05)"></div>
<div class="t" style="left:910px;top:501px;font-size:11px;color:#2e2e2e;-webkit-text-stroke:0.2px">序号</div>
<div class="t" style="left:945px;top:501px;font-size:11px;color:#2e2e2e;-webkit-text-stroke:0.2px">记录时间</div>
<div class="t" style="left:1049px;top:501px;font-size:11px;color:#2e2e2e;-webkit-text-stroke:0.2px">事件类型</div>
<div class="t" style="left:1113px;top:501px;font-size:11px;color:#2e2e2e;-webkit-text-stroke:0.2px">事件描述</div>
<svg width="1268" height="714" style="left:0;top:0" fill="#c2c6cc">
<path d="M995 505.8 L998.5 501.6 L1002 505.8Z M995 507.8 L998.5 512 L1002 507.8Z"/>
<path d="M1099 505.8 L1102.5 501.6 L1106 505.8Z M1099 507.8 L1102.5 512 L1106 507.8Z"/>
<path d="M1162 505.8 L1165.5 501.6 L1169 505.8Z M1162 507.8 L1165.5 512 L1169 507.8Z"/>
</svg>
<div class="t" style="left:900px;width:41px;text-align:center;font-size:11px;color:#444;line-height:33.8px;top:525px">1<br>2<br>3<br>4<br>5</div>
<div class="t" style="left:945px;font-size:10.6px;color:#555;line-height:33.8px;top:525.3px">2018-08-10 11:15:59<br>2018-08-09 10:10:25<br>2018-08-08 09:25:35<br>2018-08-07 12:07:35<br>2018-08-06 05:22:30</div>
<div class="t" style="left:1049px;font-size:11px;color:#555;line-height:33.8px;top:525.3px">人数统计<br>人数统计<br>人数统计<br>人数统计<br>人数统计</div>
<div class="t" style="left:1113px;width:145px;overflow:hidden;font-size:11px;letter-spacing:-0.25px;color:#555;line-height:33.8px;top:525.3px">发现1人入井（累计入井52人...<br>发现2人入井（累计入井52人...<br>发现3人入井（累计入井52人...<br>发现4人入井（累计入井52人...<br>发现5人入井（累计入井52人...</div>
<div class="a" style="left:1260px;top:527.5px;width:4.6px;height:119.5px;background:#c4c4c4;border-radius:2px"></div>
<div class="a" style="left:898px;top:680px;width:370px;height:34px;background:#fff;border-top:1px solid #eceef2"></div>
<div class="t" style="left:910px;top:692.3px;font-size:10.7px;color:#555;word-spacing:2px">共50条记录 第1/5页</div>
<div class="a" style="left:1049.5px;top:685.6px;width:23px;height:23px;border:1px solid #eef0f3;border-radius:3px"></div>
<div class="a" style="left:1080px;top:685.6px;width:23px;height:23px;border-radius:3px;background:#1a4fc2"></div>
<div class="a" style="left:1110.5px;top:685.6px;width:23px;height:23px;border:1px solid #dfe2e7;border-radius:3px"></div>
<div class="a" style="left:1141px;top:685.6px;width:23px;height:23px;border:1px solid #dfe2e7;border-radius:3px"></div>
<div class="a" style="left:1171.5px;top:685.6px;width:23px;height:23px;border:1px solid #dfe2e7;border-radius:3px"></div>
<div class="a" style="left:1202px;top:685.6px;width:23px;height:23px;border:1px solid #dfe2e7;border-radius:3px"></div>
<div class="a" style="left:1232.5px;top:685.6px;width:23px;height:23px;border:1px solid #dfe2e7;border-radius:3px"></div>
<div class="t" style="left:1080px;width:23px;text-align:center;top:692px;font-size:11px;color:#fff">1</div>
<div class="t" style="left:1110.5px;width:23px;text-align:center;top:692px;font-size:11px;color:#444">2</div>
<div class="t" style="left:1141px;width:23px;text-align:center;top:692px;font-size:11px;color:#444">···</div>
<div class="t" style="left:1171.5px;width:23px;text-align:center;top:692px;font-size:11px;color:#444">4</div>
<div class="t" style="left:1202px;width:23px;text-align:center;top:692px;font-size:11px;color:#444">5</div>
<svg width="1268" height="714" style="left:0;top:0" fill="none" stroke-width="1.2">
<path d="M1063 693 L1059 697 L1063 701" stroke="#d8dbe0"/>
<path d="M1242 693 L1246 697 L1242 701" stroke="#555"/>
</svg>
<!-- close diamond -->
<div class="a" style="left:832.5px;top:356.8px;width:53px;height:53px;background:#fff;border:1px solid #3a56b0;transform:rotate(45deg)"></div>
<svg width="30" height="30" style="left:844px;top:368.3px"><path d="M8 8 L22 22 M22 8 L8 22" stroke="#1a47b0" stroke-width="2.6"/></svg>
</body></html>
